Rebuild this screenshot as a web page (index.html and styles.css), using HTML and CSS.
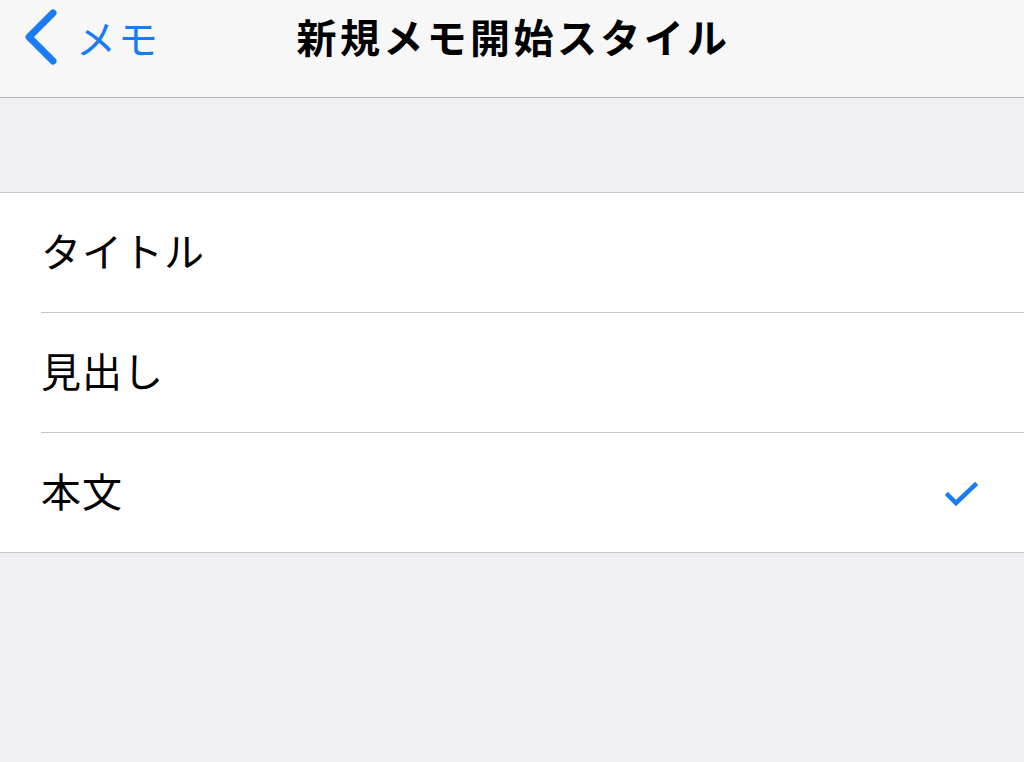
FILE: index.html
```html
<!DOCTYPE html>
<html lang="ja">
<head>
<meta charset="utf-8">
<link rel="stylesheet" href="styles.css">
</head>
<body>
<header class="navbar">
  <a class="back">
    <svg class="chevron" width="36" height="56" viewBox="0 0 36 56"><path d="M31 4 L7 28 L31 52" fill="none" stroke="#1a7cf5" stroke-width="7" stroke-linecap="round" stroke-linejoin="round"/></svg>
    <span class="back-label">メモ</span>
  </a>
  <h1 class="title">新規メモ開始スタイル</h1>
</header>
<div class="spacer"></div>
<ul class="group">
  <li class="row"><span class="label">タイトル</span></li>
  <li class="row"><span class="label">見出し</span></li>
  <li class="row"><span class="label">本文</span>
    <svg class="check" width="36" height="28" viewBox="0 0 36 28"><path d="M4 15 L12 23 L31 5" fill="none" stroke="#1a7cf5" stroke-width="4.5" stroke-linecap="square"/></svg>
  </li>
</ul>
</body>
</html>
```
FILE: styles.css
```css
* { box-sizing: border-box; }
html, body { margin: 0; padding: 0; }
body {
  width: 1024px;
  height: 762px;
  background: #efeff4;
  font-family: "Noto Sans CJK JP", "Noto Sans", sans-serif;
  overflow: hidden;
}
.navbar {
  position: relative;
  height: 98px;
  background: #f7f7f8;
  border-bottom: 1px solid #b4b4b6;
  display: flex;
  align-items: flex-start;
  justify-content: center;
}
.back {
  position: absolute;
  left: 22px;
  top: 9px;
  display: flex;
  align-items: center;
  gap: 18px;
  color: #1a7cf5;
}
.chevron { display: block; }
.back-label {
  font-size: 40px;
  line-height: 56px;
  letter-spacing: 2px;
}
.title {
  margin: 0;
  margin-top: 8px;
  padding-left: 3px;
  font-size: 40px;
  line-height: 56px;
  font-weight: 700;
  color: #000;
  letter-spacing: 3.4px;
}
.spacer { height: 94px; }
.group {
  list-style: none;
  margin: 0;
  padding: 0 0 0 41px;
  background: #fff;
  border-top: 1px solid #c8c7cc;
  border-bottom: 1px solid #c8c7cc;
}
.row {
  height: 120px;
  display: flex;
  align-items: center;
  justify-content: space-between;
  padding-right: 44px;
  border-bottom: 1px solid #c8c7cc;
}
.row:last-child { border-bottom: none; height: 119px; }
.label {
  font-size: 40px;
  line-height: 1;
  color: #000;
  letter-spacing: 1px;
  margin-bottom: 6px;
}
.check { display: block; margin-top: 2px; }
```
